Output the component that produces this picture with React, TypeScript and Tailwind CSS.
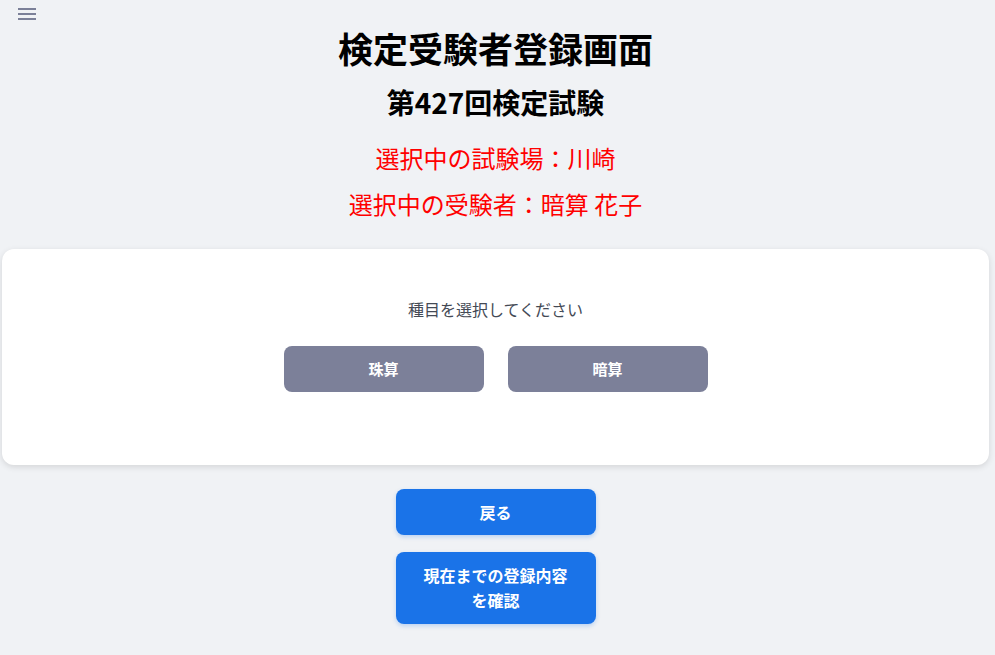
import React from 'react'

const font = { fontFamily: '"Noto Sans CJK JP", "Noto Sans", sans-serif' }

function MenuIcon() {
  return (
    <svg width="18" height="12" viewBox="0 0 18 12" fill="#7b8098">
      <rect x="0" y="0" width="18" height="2" />
      <rect x="0" y="5" width="18" height="2" />
      <rect x="0" y="10" width="18" height="2" />
    </svg>
  )
}

export default function App() {
  const subjects = ['珠算', '暗算']

  return (
    <div className="min-h-[655px] w-[995px] bg-[#f0f2f5] font-['Noto_Sans_CJK_JP','Noto_Sans',sans-serif]" style={font}>
      <div className="w-[991px]">
        {/* ヘッダー */}
        <div className="h-[27px] pl-[18px] pt-[8px]">
          <MenuIcon />
        </div>

        <h1 className="text-center text-[35px] leading-[42px] font-bold text-black">検定受験者登録画面</h1>
        <h2 className="mt-[16px] text-center text-[28px] leading-[34px] font-bold text-black">第427回検定試験</h2>

        <p className="mt-[23px] text-center text-[24px] leading-[32px] text-[#ff0000]">選択中の試験場：川崎</p>
        <p className="mt-[14px] text-center text-[24px] leading-[32px] text-[#ff0000]">選択中の受験者：暗算 花子</p>

        {/* 種目選択 */}
        <div className="mx-[2px] mt-[29px] h-[216px] rounded-xl bg-white pt-[48px] shadow-[0_2px_6px_rgba(0,0,0,0.12)]">
          <p className="text-center text-[16px] leading-[24px] text-[#444a55]">種目を選択してください</p>
          <div className="mt-[25px] flex justify-center gap-[24px]">
            {subjects.map(s => (
              <button
                key={s}
                className="h-[46px] w-[200px] rounded-lg bg-[#7c8099] text-[15px] font-bold text-white"
              >
                {s}
              </button>
            ))}
          </div>
        </div>

        {/* 操作ボタン */}
        <div className="mt-[24px] flex flex-col items-center gap-[17px]">
          <button className="h-[46px] w-[200px] rounded-lg bg-[#1a73e8] text-[16px] leading-[24px] font-bold text-white shadow-[0_2px_4px_rgba(26,115,232,0.25)]">
            戻る
          </button>
          <button className="h-[72px] w-[200px] rounded-lg bg-[#1a73e8] px-4 text-[16px] leading-[25px] font-bold text-white shadow-[0_2px_4px_rgba(26,115,232,0.25)]">
            現在までの登録内容
            <br />
            を確認
          </button>
        </div>
      </div>
    </div>
  )
}
